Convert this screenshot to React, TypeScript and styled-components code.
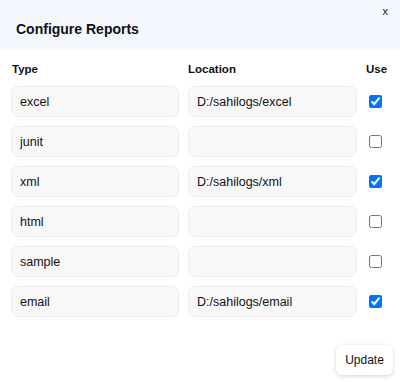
import styled, { createGlobalStyle } from 'styled-components';

interface IReport {
  type: string;
  location: string;
  use: boolean;
}

const reports: IReport[] = [
  { type: 'excel', location: 'D:/sahilogs/excel', use: true },
  { type: 'junit', location: '', use: false },
  { type: 'xml', location: 'D:/sahilogs/xml', use: true },
  { type: 'html', location: '', use: false },
  { type: 'sample', location: '', use: false },
  { type: 'email', location: 'D:/sahilogs/email', use: true },
];

const GlobalStyle = createGlobalStyle`
  body {
    margin: 0;
    background: #fff;
    font-family: "Liberation Sans", Arial, sans-serif;
    color: #111;
  }
`;

const Dialog = styled.div`
  width: 400px;
  height: 382px;
  display: flex;
  flex-direction: column;
  background: #fff;
`;

const Header = styled.div`
  position: relative;
  height: 50px;
  background: #f4f7fd;
  display: flex;
  align-items: center;
  padding-left: 16px;
  box-sizing: border-box;

  h1 {
    margin: 7px 0 0;
    font-size: 14px;
    font-weight: 700;
    color: #111;
  }
`;

const Close = styled.button`
  position: absolute;
  top: 5px;
  right: 12px;
  border: 0;
  background: none;
  padding: 0;
  font: 11px "Liberation Sans", Arial, sans-serif;
  color: #222;
  cursor: pointer;
`;

const Grid = styled.div`
  display: grid;
  grid-template-columns: 168px 169px 1fr;
  column-gap: 9px;
  row-gap: 9px;
  padding: 12px 0 0 11px;
  align-items: center;
`;

const ColHead = styled.div<{ $offset?: number }>`
  font-size: 11.5px;
  font-weight: 700;
  padding-left: ${(p) => p.$offset ?? 0}px;
  height: 14px;
  line-height: 14px;
  margin-bottom: 1px;
`;

const Field = styled.input`
  box-sizing: border-box;
  width: 100%;
  height: 31px;
  margin: 0;
  padding: 0 8px;
  border: 1px solid #ececec;
  border-radius: 7px;
  background: #f8f8f8;
  font: 12.5px "Liberation Sans", Arial, sans-serif;
  color: #111;
  outline: none;
`;

const Check = styled.input`
  width: 13px;
  height: 13px;
  margin: 0 0 0 3px;
  accent-color: #0075ff;
`;

const Footer = styled.div`
  margin-top: auto;
  display: flex;
  justify-content: flex-end;
  padding: 0 7px 7px 0;
`;

const UpdateButton = styled.button`
  width: 57px;
  height: 30px;
  border: 0;
  border-radius: 6px;
  background: #fff;
  box-shadow: 0 1px 4px rgba(0, 0, 0, 0.18);
  font: 12px "Liberation Sans", Arial, sans-serif;
  color: #111;
  cursor: pointer;
`;

export default function App() {
  return (
    <Dialog>
      <GlobalStyle />
      <Header>
        <h1>Configure Reports</h1>
        <Close>x</Close>
      </Header>
      <Grid>
        <ColHead $offset={1}>Type</ColHead>
        <ColHead>Location</ColHead>
        <ColHead>Use</ColHead>
        {reports.map((r) => [
          <Field key={r.type + '-t'} defaultValue={r.type} />,
          <Field key={r.type + '-l'} defaultValue={r.location} />,
          <Check key={r.type + '-c'} type="checkbox" defaultChecked={r.use} />,
        ])}
      </Grid>
      <Footer>
        <UpdateButton>Update</UpdateButton>
      </Footer>
    </Dialog>
  );
}
